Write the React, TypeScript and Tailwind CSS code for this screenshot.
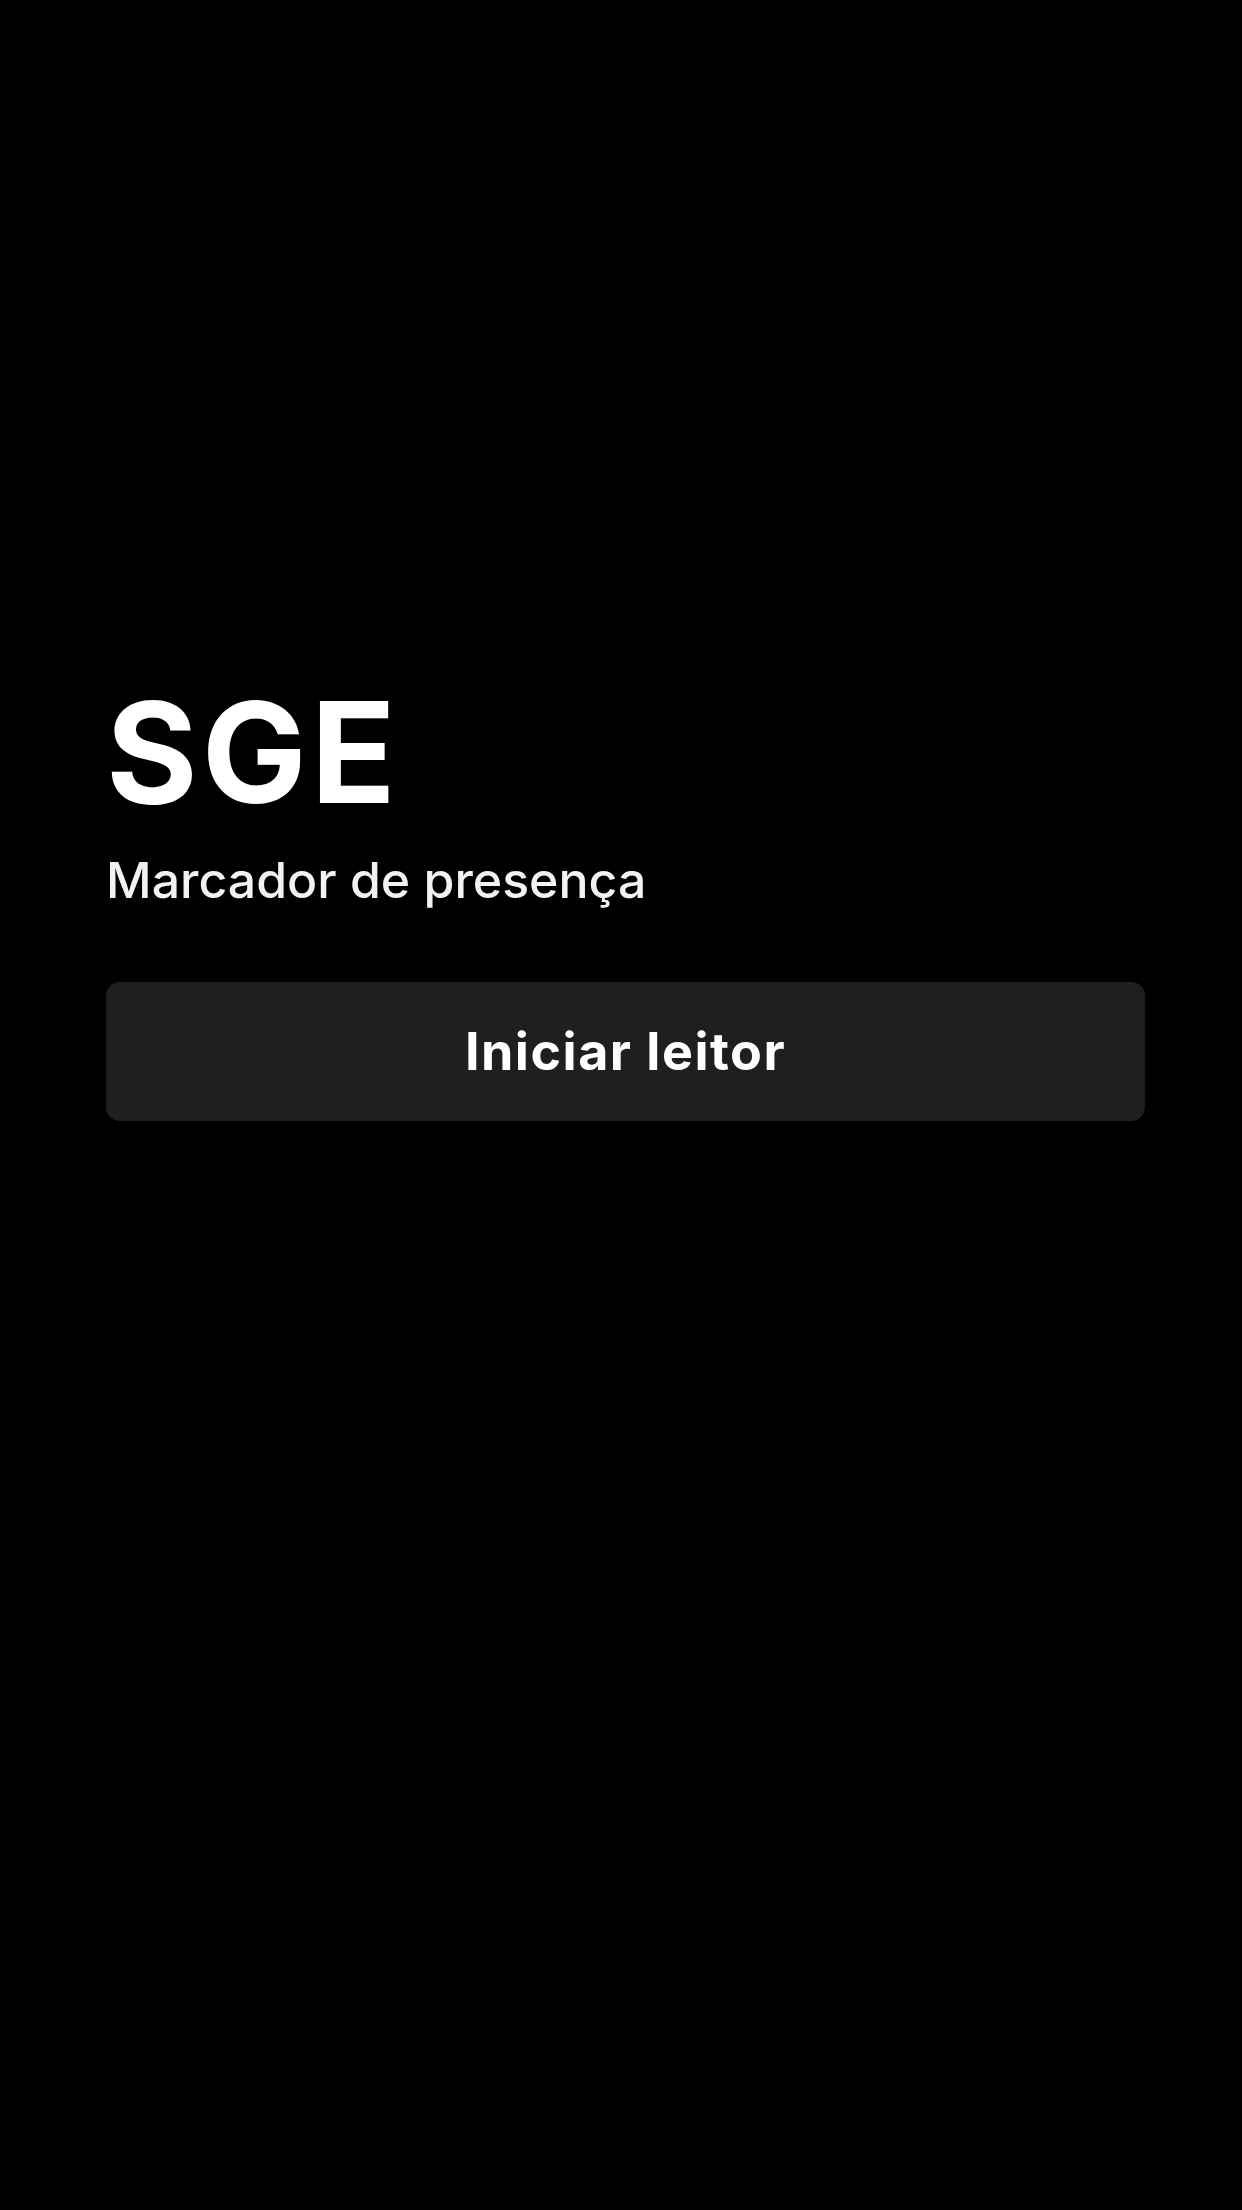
import React from "react";

export default function App() {
  return (
    <div
      className="min-h-[2210px] w-full bg-black text-white"
      style={{ fontFamily: "Inter, 'Noto Sans', sans-serif" }}
    >
      <div className="pl-[106px] pr-[97px] pt-[677px]">
        <h1 className="text-[140px] font-bold leading-[150px] tracking-[4px] text-white">SGE</h1>
        <p className="mt-[23px] text-[50px] font-medium leading-[60px] tracking-[0px] text-[#f2f2f2]">Marcador de presença</p>
        <button className="mt-[72px] flex h-[139px] w-full items-center justify-center rounded-[14px] bg-[#1f1f1f] text-[52px] font-bold tracking-[1.5px] text-white">
          Iniciar leitor
        </button>
      </div>
    </div>
  );
}
